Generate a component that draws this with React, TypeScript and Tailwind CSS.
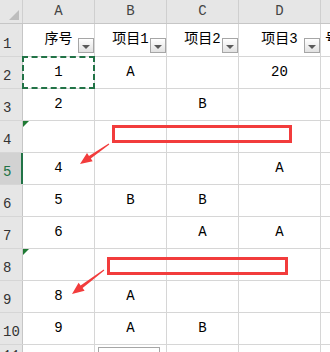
import React from "react"

const cn = (...c: (string | false | undefined)[]) => c.filter(Boolean).join(" ")

const colW = ["w-[72px]", "w-[72px]", "w-[72px]", "w-[82px]"]
const letters = ["A", "B", "C", "D"]
const titles = ["序号", "项目1", "项目2", "项目3"]

// rows 2..10
const data = [
  ["1", "A", "", "20"],
  ["2", "", "B", ""],
  ["", "", "", ""],
  ["4", "", "", "A"],
  ["5", "B", "B", ""],
  ["6", "", "A", "A"],
  ["", "", "", ""],
  ["8", "A", "", ""],
  ["9", "A", "B", ""],
]

const font = "font-['Liberation_Mono','Noto_Sans_CJK_SC',monospace]"

function FilterButton() {
  return (
    <div className="absolute right-0 bottom-[3px] w-[16px] h-[15px] border border-[#a6a6a6] bg-gradient-to-b from-white to-[#e2e2e2] flex items-center justify-center">
      <div className="w-0 h-0 border-l-[4px] border-r-[4px] border-t-[4px] border-l-transparent border-r-transparent border-t-[#5a5a5a] mt-[2px]" />
    </div>
  )
}

function arrow(sx: number, sy: number, tx: number, ty: number) {
  const dx = tx - sx
  const dy = ty - sy
  const len = Math.hypot(dx, dy)
  const ux = dx / len
  const uy = dy / len
  const px = -uy
  const py = ux
  const bx = tx - ux * 12
  const by = ty - uy * 12
  const pts = [
    [sx + px * 0.5, sy + py * 0.5],
    [bx + px * 1.6, by + py * 1.6],
    [bx + px * 5, by + py * 5],
    [tx, ty],
    [bx - px * 5, by - py * 5],
    [bx - px * 1.6, by - py * 1.6],
    [sx - px * 0.5, sy - py * 0.5],
  ]
  return pts.map((p) => p.map((v) => v.toFixed(1)).join(",")).join(" ")
}

export default function App() {
  return (
    <div className={cn("relative w-[330px] h-[352px] overflow-hidden bg-white text-[14px] text-black", font)}>
      {/* column headers */}
      <div className="flex h-[24px] bg-[#e6e6e6] border-b border-[#c6c6c6]">
        <div className="relative w-[23px] shrink-0 border-r border-[#cfcfcf]">
          <div className="absolute left-[9px] top-[10px] w-0 h-0 border-b-[10px] border-l-[10px] border-b-[#bdbdbd] border-l-transparent" />
        </div>
        {letters.map((l, i) => (
          <div key={l} className={cn(colW[i], "shrink-0 border-r border-[#cfcfcf] flex items-center justify-center text-[#444]")}>
            {l}
          </div>
        ))}
        <div className="flex-1" />
      </div>

      {/* row 1: titles */}
      <div className="flex h-[33px] border-b border-[#d6d6d6]">
        <div className="w-[23px] shrink-0 bg-[#e6e6e6] border-r border-[#c6c6c6] flex items-end pl-[3px] pb-[1px] text-[#333]">1</div>
        {titles.map((t, i) => (
          <div key={t} className={cn(colW[i], "relative shrink-0 border-r border-[#d6d6d6] flex items-center justify-center pb-[2px]")}>
            <span>{t}</span>
            <FilterButton />
          </div>
        ))}
        <div className="flex-1 pl-[4px] flex items-center pb-[2px]">号</div>
      </div>

      {data.map((row, r) => {
        const n = r + 2
        const hl = n === 5
        return (
          <div key={n} className="flex h-[32px] border-b border-[#d6d6d6]">
            <div
              className={cn(
                "w-[23px] shrink-0 flex items-end pl-[3px] pb-[1px]",
                hl ? "bg-[#d2d2d2] text-[#217346] border-r-2 border-[#217346]" : "bg-[#e6e6e6] text-[#333] border-r border-[#c6c6c6]"
              )}
            >
              {n}
            </div>
            {row.map((v, i) => (
              <div key={i} className={cn(colW[i], "relative shrink-0 border-r border-[#d6d6d6] flex items-center justify-center")}>
                {v}
                {i === 0 && (n === 4 || n === 8) && (
                  <div className="absolute left-0 top-0 w-0 h-0 border-t-[6px] border-r-[6px] border-t-[#1f7a34] border-r-transparent" />
                )}
                {i === 0 && n === 2 && (
                  <div className="absolute -left-[1px] -top-[1px] -right-[1px] -bottom-[1px] border-2 border-dashed border-[#217346]" />
                )}
              </div>
            ))}
            <div className="flex-1" />
          </div>
        )
      })}

      {/* row 11, cut off */}
      <div className="flex h-[32px]">
        <div className="w-[23px] shrink-0 bg-[#e6e6e6] border-r border-[#c6c6c6] pl-[3px] pt-[1px] text-[#333]">11</div>
        <div className="w-[72px] shrink-0 border-r border-[#d6d6d6]" />
        <div className="w-[72px] shrink-0 border-r border-[#d6d6d6] pl-[3px] pt-[2px]">
          <div className="w-[62px] h-[20px] border border-[#a6a6a6] bg-white" />
        </div>
        <div className="w-[72px] shrink-0 border-r border-[#d6d6d6]" />
        <div className="w-[82px] shrink-0 border-r border-[#d6d6d6]" />
      </div>

      {/* annotations */}
      <div className="absolute left-[112px] top-[125px] w-[180px] h-[18px] border-[3px] border-[#f23c3c]" />
      <div className="absolute left-[107px] top-[257px] w-[181px] h-[18px] border-[3px] border-[#f23c3c]" />
      <svg className="absolute left-0 top-0" width={330} height={352}>
        <polygon points={arrow(109, 144, 80, 164)} fill="#f23c3c" />
        <polygon points={arrow(104, 270, 72, 294)} fill="#f23c3c" />
      </svg>
    </div>
  )
}
